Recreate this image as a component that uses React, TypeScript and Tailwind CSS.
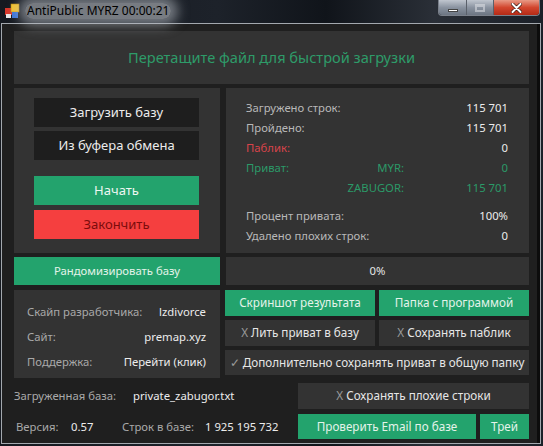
import React from "react";

const FONT = "font-['Noto_Sans','Open_Sans',sans-serif]";

type Stat = { label: string; value: string; sub?: string; tone?: "red" | "green" };

const STATS_TOP: Stat[] = [
	{ label: "Загружено строк:", value: "115 701" },
	{ label: "Пройдено:", value: "115 701" },
	{ label: "Паблик:", value: "0", tone: "red" },
	{ label: "Приват:", sub: "MYR:", value: "0", tone: "green" },
	{ label: "", sub: "ZABUGOR:", value: "115 701", tone: "green" },
];

const STATS_BOTTOM: Stat[] = [
	{ label: "Процент привата:", value: "100%" },
	{ label: "Удалено плохих строк:", value: "0" },
];

const DEV_INFO = [
	{ label: "Скайп разработчика:", value: "lzdivorce" },
	{ label: "Сайт:", value: "premap.xyz" },
	{ label: "Поддержка:", value: "Перейти (клик)" },
];

function StatRow({ s }: { s: Stat }) {
	const labelColor =
		s.tone === "red" ? "text-[#d9434a]" : s.tone === "green" ? "text-[#2b9a68]" : "text-[#b8b8b8]";
	const valueColor = s.tone === "green" ? "text-[#2b9a68]" : "text-[#ececec]";
	return (
		<div className="flex h-[20px] items-center">
			<span className={`flex-1 ${labelColor}`}>{s.label}</span>
			{s.sub && <span className="text-[#2b9a68]">{s.sub}</span>}
			<span className={`w-[104px] text-right ${valueColor}`}>{s.value}</span>
		</div>
	);
}

function WinIcon() {
	return (
		<svg width="16" height="16" viewBox="0 0 16 16">
			<rect x="1" y="5" width="7" height="7" fill="#d8382c" />
			<rect x="7" y="1" width="8" height="8" fill="#f2c230" stroke="#b88a10" strokeWidth="0.6" />
			<rect x="8" y="9" width="6" height="6" fill="#3a74d8" />
			<rect x="2" y="11" width="5" height="4" fill="#e8e8e8" />
		</svg>
	);
}

export default function App() {
	return (
		<div
			className={`${FONT} w-[543px] h-[446px] overflow-hidden bg-[linear-gradient(90deg,#151920_0%,#1d222a_40%,#10141a_60%,#2a2f37_80%,#1b2028_100%)] flex flex-col`}
		>
			{/* title bar */}
			<div className="h-[23px] flex items-start relative shrink-0">
				<div className="pl-[4px] pt-[3px]">
					<WinIcon />
				</div>
				<div className="ml-[5px] mt-[3px] px-[2px] rounded-[8px] bg-[#c4c8ce]/55 shadow-[0_0_12px_7px_rgba(190,195,202,0.55)] text-[12px] leading-[16px] text-black">
					AntiPublic MYRZ 00:00:21
				</div>
				{/* caption buttons */}
				<div className="ml-auto mr-[3px] flex h-[16px] rounded-b-[4px] border border-t-0 border-[#7a808a] overflow-hidden">
					<div className="w-[28px] flex items-center justify-center bg-[linear-gradient(#c0c6cf,#8a93a0_50%,#6c7582)] border-r border-[#5a606a]">
						<div className="w-[10px] h-[3px] mt-[5px] bg-white border border-[#444]" />
					</div>
					<div className="w-[27px] flex items-center justify-center bg-[linear-gradient(#c0c6cf,#8a93a0_50%,#6c7582)] border-r border-[#5a606a]">
						<div className="w-[10px] h-[8px] border-2 border-t-[3px] border-[#e6e8eb] opacity-50" />
					</div>
					<div className="w-[45px] flex items-center justify-center bg-[linear-gradient(#e89a86,#d2462e_50%,#b42a16)]">
						<svg width="11" height="10" viewBox="0 0 11 10">
							<path d="M1.5 1l8 8M9.5 1l-8 8" stroke="#3a1a12" strokeWidth="3.4" strokeLinecap="round" />
							<path d="M1.5 1l8 8M9.5 1l-8 8" stroke="#fff" strokeWidth="2" strokeLinecap="round" />
						</svg>
					</div>
				</div>
			</div>

			{/* window body */}
			<div className="ml-[1px] w-[540px] h-[421px] border border-[#a3a8ae] bg-[#1f1f1f] flex">
				<div className="flex-1 pl-[12px] pt-[7px] text-[11.3px] leading-none">
					<div className="w-[515px] flex flex-col">
						{/* drop zone */}
						<div className="h-[53px] bg-[#333333] flex items-center justify-center text-[14.6px] text-[#2e9b69]">
							Перетащите файл для быстрой загрузки
						</div>

						<div className="mt-[4px] flex gap-[6px]">
							{/* controls */}
							<div className="w-[206px] h-[165px] bg-[#333333] pl-[20px] pt-[10px] text-[13px]">
								<div className="w-[165px] flex flex-col gap-[4px]">
									<button className="h-[29px] bg-[#1e1e1e] text-[#ececec]">Загрузить базу</button>
									<button className="h-[29px] bg-[#1e1e1e] text-[#ececec]">Из буфера обмена</button>
									<button className="mt-[12px] h-[29px] bg-[#23a36d] text-[#eef7f2]">Начать</button>
									<button className="mt-[1px] h-[29px] bg-[#f53f3f] text-[#7c0c0c]">Закончить</button>
								</div>
							</div>
							{/* stats */}
							<div className="w-[303px] h-[165px] bg-[#333333] pl-[20px] pr-[21px] pt-[10px]">
								{STATS_TOP.map((s, i) => (
									<StatRow key={i} s={s} />
								))}
								<div className="h-[8px]" />
								{STATS_BOTTOM.map((s, i) => (
									<StatRow key={i} s={s} />
								))}
							</div>
						</div>

						<div className="mt-[4px] flex gap-[6px]">
							<button className="w-[206px] h-[28px] bg-[#23a36d] text-[#e4f3ea]">Рандомизировать базу</button>
							<div className="w-[303px] h-[28px] bg-[#333333] flex items-center justify-center text-[#e6e6e6]">
								0%
							</div>
						</div>

						<div className="mt-[5px] flex gap-[5px]">
							{/* developer info */}
							<div className="w-[206px] h-[88px] bg-[#333333] pl-[13px] pr-[14px] pt-[9px]">
								{DEV_INFO.map((r) => (
									<div key={r.label} className="h-[25px] flex items-center justify-between">
										<span className="text-[#a9a9a9]">{r.label}</span>
										<span className="text-[#ececec]">{r.value}</span>
									</div>
								))}
							</div>
							{/* options */}
							<div className="w-[304px] flex flex-col gap-[4px] text-[11.7px]">
								<div className="grid grid-cols-2 gap-[4px]">
									<button className="h-[26px] bg-[#23a36d] text-[#e4f3ea]">Скриншот результата</button>
									<button className="h-[26px] bg-[#23a36d] text-[#e4f3ea]">Папка с программой</button>
								</div>
								<div className="grid grid-cols-2 gap-[4px]">
									<button className="h-[26px] bg-[#333333] text-[#e6e6e6]">
										<span className="text-[#9a9a9a]">X</span> Лить приват в базу
									</button>
									<button className="h-[26px] bg-[#333333] text-[#e6e6e6]">
										<span className="text-[#9a9a9a]">X</span> Сохранять паблик
									</button>
								</div>
								<button className="h-[25px] bg-[#333333] text-[#e6e6e6] whitespace-nowrap">
									<span className="text-[#9a9a9a]">✓</span> Дополнительно сохранять приват в общую папку
								</button>
							</div>
						</div>

						{/* footer rows */}
						<div className="mt-[5px] flex items-center h-[26px]">
							<span className="w-[119px] text-[#a9a9a9]">Загруженная база:</span>
							<span className="text-[#ececec]">private_zabugor.txt</span>
							<button className="ml-auto w-[231px] h-[26px] bg-[#333333] text-[#e6e6e6] text-[11.7px]">
								<span className="text-[#9a9a9a]">X</span> Сохранять плохие строки
							</button>
						</div>
						<div className="mt-[5px] flex items-center h-[25px]">
							<span className="pl-[2px] w-[57px] text-[#a9a9a9]">Версия:</span>
							<span className="w-[51px] text-[#ececec]">0.57</span>
							<span className="w-[83px] text-[#a9a9a9]">Строк в базе:</span>
							<span className="text-[#ececec]">1 925 195 732</span>
							<button className="ml-auto w-[178px] h-[25px] bg-[#23a36d] text-[#e4f3ea] text-[11.7px]">
								Проверить Email по базе
							</button>
							<button className="ml-[4px] w-[49px] h-[25px] bg-[#23a36d] text-[#e4f3ea] text-[11.7px]">
								Трей
							</button>
						</div>
					</div>
				</div>
				<div className="w-[3px] bg-[#0c0c0c]" />
			</div>
		</div>
	);
}
